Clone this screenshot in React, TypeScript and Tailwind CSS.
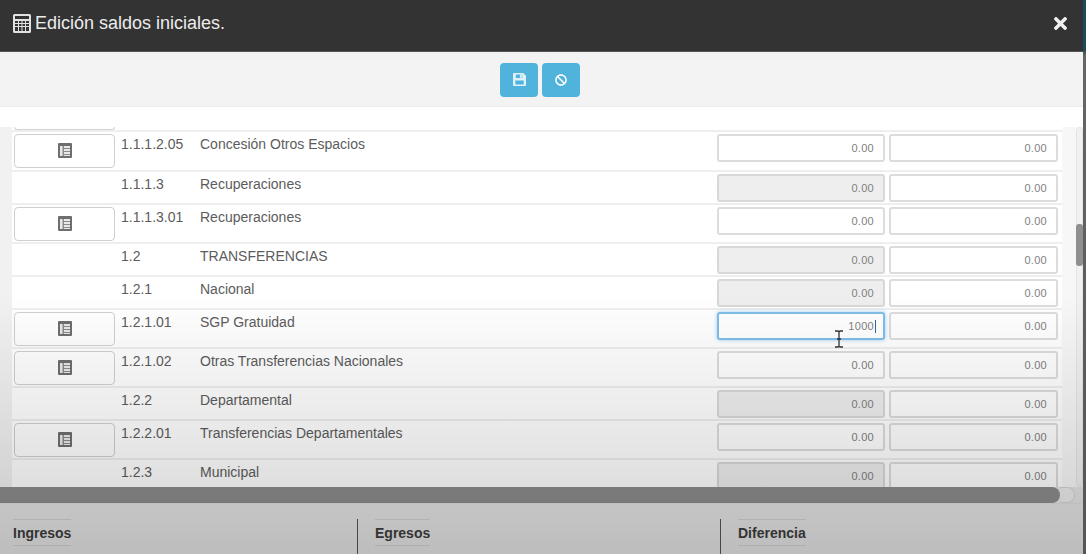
import React from "react";
import { FaTimes, FaBan } from "react-icons/fa";

type Row = {
    code: string;
    name: string;
    height: string;
    button: boolean;
    first: "open" | "locked" | "active";
    value?: string;
};

const rows: Row[] = [
    { code: "1.1.1.2.05", name: "Concesión Otros Espacios", height: "h-[40px]", button: true, first: "open" },
    { code: "1.1.1.3", name: "Recuperaciones", height: "h-[33px]", button: false, first: "locked" },
    { code: "1.1.1.3.01", name: "Recuperaciones", height: "h-[39px]", button: true, first: "open" },
    { code: "1.2", name: "TRANSFERENCIAS", height: "h-[33px]", button: false, first: "locked" },
    { code: "1.2.1", name: "Nacional", height: "h-[33px]", button: false, first: "locked" },
    { code: "1.2.1.01", name: "SGP Gratuidad", height: "h-[39px]", button: true, first: "active", value: "1000" },
    { code: "1.2.1.02", name: "Otras Transferencias Nacionales", height: "h-[39px]", button: true, first: "open" },
    { code: "1.2.2", name: "Departamental", height: "h-[33px]", button: false, first: "locked" },
    { code: "1.2.2.01", name: "Transferencias Departamentales", height: "h-[39px]", button: true, first: "open" },
    { code: "1.2.3", name: "Municipal", height: "h-[33px]", button: false, first: "locked" }
];

const CalculatorIcon = () => (
    <svg width="18" height="19" viewBox="0 0 18 19" className="text-[#e2e2e2]">
        <path
            fill="currentColor"
            fillRule="evenodd"
            d="M1.500 0h15A1.500 1.500 0 0 1 18 1.500v16a1.500 1.500 0 0 1-1.500 1.500h-15A1.500 1.500 0 0 1 0 17.500v-16A1.500 1.500 0 0 1 1.500 0zM2 2v3h14V2zM2 7v2h3V7zm4 0v2h2.500V7zm3.500 0v2H12V7zM13 7v2h3V7zM2 10v2h3v-2zm4 0v2h2.500v-2zm3.500 0v2H12v-2zM13 10v2h3v-2zM2 13v4h3v-4zm4 0v4h2.500v-4zm3.500 0v4H12v-4zM13 13v4h3v-4z"
        />
    </svg>
);

const SaveIcon = () => (
    <svg width="13" height="13" viewBox="0 0 14 14" className="text-[#dff1f8]">
        <path
            fill="currentColor"
            fillRule="evenodd"
            d="M1 0h10l3 3v10a1 1 0 0 1-1 1H1a1 1 0 0 1-1-1V1a1 1 0 0 1 1-1zm2 1.500v4h7v-4zM7.500 2H9.500v3h-2zM2.500 8v4.500h9V8z"
        />
    </svg>
);

const ListIcon = () => (
    <svg width="14" height="15" viewBox="0 0 14 15">
        <path fill="#6e6e6e" d="M1 0h12a1 1 0 0 1 1 1v13a1 1 0 0 1-1 1H1a1 1 0 0 1-1-1V1a1 1 0 0 1 1-1z" />
        <path fill="#e8e8e8" d="M2 3h10v10H2z" />
        <path fill="#8a8a8a" d="M4.500 3H6v10H4.500zM6 5h6v1H6zM6 8h6v1H6zM6 11h6v1H6z" />
    </svg>
);

const CursorIcon = () => (
    <svg width="10" height="18" viewBox="0 0 10 18" className="absolute left-[834px] top-[330px]">
        <path d="M1 1h3l1 1 1-1h3M5 2v14M1 17h3l1-1 1 1h3M3 9h4" fill="none" stroke="#333333" strokeWidth="1.300" />
    </svg>
);

const AmountBox = ({ variant, value = "0.00" }: { variant: "open" | "locked" | "active"; value?: string }) => {
    const look = {
        open: "bg-white border-[#dcdcdc]",
        locked: "bg-[#eeeeee] border-[#d8d8d8]",
        active: "bg-white border-[#80bde8] shadow-[0_0_4px_rgba(102,175,233,0.6)]"
    }[variant];

    return (
        <div className={`flex h-[28px] items-center justify-end rounded-[3px] border-2 pr-[9px] text-[11px] tracking-[0.3px] text-[#808080] ${look}`}>
            {value}
            {variant === "active" && <span className="-mr-[2px] ml-px h-[13px] w-px bg-[#336699]"></span>}
        </div>
    );
};

const FooterCell = ({ label, divider }: { label: string; divider: boolean }) => (
    <div className={`flex h-full flex-col items-start pl-[13px] ${divider ? "border-l border-[#555555] pl-[17px]" : ""}`}>
        <div className="border-y border-[#d0d0d0] pb-[3px] pt-[5px] text-[14px] font-bold leading-[17px] text-[#3c3c3c]">
            {label}
        </div>
    </div>
);

export default function App() {
    return (
        <div className="relative flex h-[554px] w-[1086px] flex-col overflow-hidden bg-white font-['Liberation_Sans',Arial,sans-serif]">
            {/* Title bar */}
            <header className="mr-[3px] flex h-[52px] shrink-0 items-center justify-between border-b border-[#555555] bg-[#333333] pb-[5px] pl-[13px] pr-[13px]">
                <div className="flex items-center gap-[4px] text-[18px] text-[#ececec]">
                    <CalculatorIcon />
                    <span>Edición saldos iniciales.</span>
                </div>
                <FaTimes className="text-[19px] text-[#f0f0f0]" />
            </header>

            {/* Toolbar */}
            <div className="mr-[3px] flex h-[55px] shrink-0 items-center justify-center gap-[4px] border-b border-[#ebebeb] bg-[#f3f3f3] pr-[3px] pt-[1px]">
                <button className="flex h-[34px] w-[38px] items-center justify-center rounded-[4px] bg-[#4fb3dc]">
                    <SaveIcon />
                </button>
                <button className="flex h-[34px] w-[38px] items-center justify-center rounded-[4px] bg-[#4fb3dc]">
                    <FaBan className="text-[12px] text-white" />
                </button>
            </div>

            {/* Table area */}
            <div className="flex h-[380px] shrink-0 flex-col bg-white pt-[20px]">
                <div className="flex min-h-0 flex-1">
                    <div className="w-[12px] shrink-0 bg-[#f1f1f1]"></div>
                    <div className="min-h-0 w-[1050px] shrink-0 overflow-hidden">
                        <div className="h-[5px] border-b-2 border-[#eeeeee]">
                            <div className="ml-[2px] h-[3px] w-[101px] rounded-b-[3px] border-x border-b border-[#d4d4d4]"></div>
                        </div>
                        {rows.map(row => (
                            <div key={row.code} className={`grid grid-cols-[109px_79px_517px_168px_173px] border-b-2 border-[#eeeeee] ${row.height}`}>
                                <div className="pl-[2px] pt-[2px]">
                                    {row.button && (
                                        <div className="flex h-[34px] w-[101px] items-center justify-center rounded-[4px] border border-[#cfcfcf] bg-white pb-[2px]">
                                            <ListIcon />
                                        </div>
                                    )}
                                </div>
                                <div className="pt-[3px] text-[14px] leading-[18px] text-[#5c5c5c]">{row.code}</div>
                                <div className="pt-[3px] text-[14px] leading-[18px] text-[#5c5c5c]">{row.name}</div>
                                <div className="pt-[2px]">
                                    <AmountBox variant={row.first} value={row.value} />
                                </div>
                                <div className="pl-[4px] pt-[2px]">
                                    <AmountBox variant="open" />
                                </div>
                            </div>
                        ))}
                    </div>
                    {/* Vertical scrollbar */}
                    <div className="flex flex-1 justify-end bg-[#f7f7f7] pr-[3px]">
                        <div className="h-full w-[7px] rounded-full border border-[#e4e4e4] bg-[#f1f1f1] pt-[96px]">
                            <div className="-mx-px h-[42px] rounded-[3px] bg-[#8f8f8f]"></div>
                        </div>
                    </div>
                </div>
            </div>

            {/* Horizontal scrollbar */}
            <div className="flex h-[16px] shrink-0 items-center bg-[#e4e4e4]">
                <div className="h-full w-[1060px] rounded-r-full bg-[#8c8c8c]"></div>
                <div className="h-[16px] w-[15px] rounded-r-full border-y border-r border-[#d4d4d4] bg-[#ececec]"></div>
            </div>

            {/* Totals */}
            <footer className="flex flex-1 border-t border-[#dddddd] bg-[#e4e4e4] pt-[15px]">
                <div className="flex w-[1083px]">
                    <div className="w-[357px]"><FooterCell label="Ingresos" divider={false} /></div>
                    <div className="w-[363px]"><FooterCell label="Egresos" divider /></div>
                    <div className="flex-1"><FooterCell label="Diferencia" divider /></div>
                </div>
            </footer>

            {/* Fade that lies over the lower part of the page */}
            <div className="pointer-events-none absolute inset-x-0 bottom-0 h-[260px] bg-gradient-to-b from-black/0 to-black/17"></div>
            {/* Edge of the page behind the dialog */}
            <div className="pointer-events-none absolute inset-y-0 right-0 w-[3px] bg-gradient-to-b from-[#1d4a58] from-[9%] via-[#666666] via-[10%] to-[#555555]"></div>
            <CursorIcon />
        </div>
    );
}
